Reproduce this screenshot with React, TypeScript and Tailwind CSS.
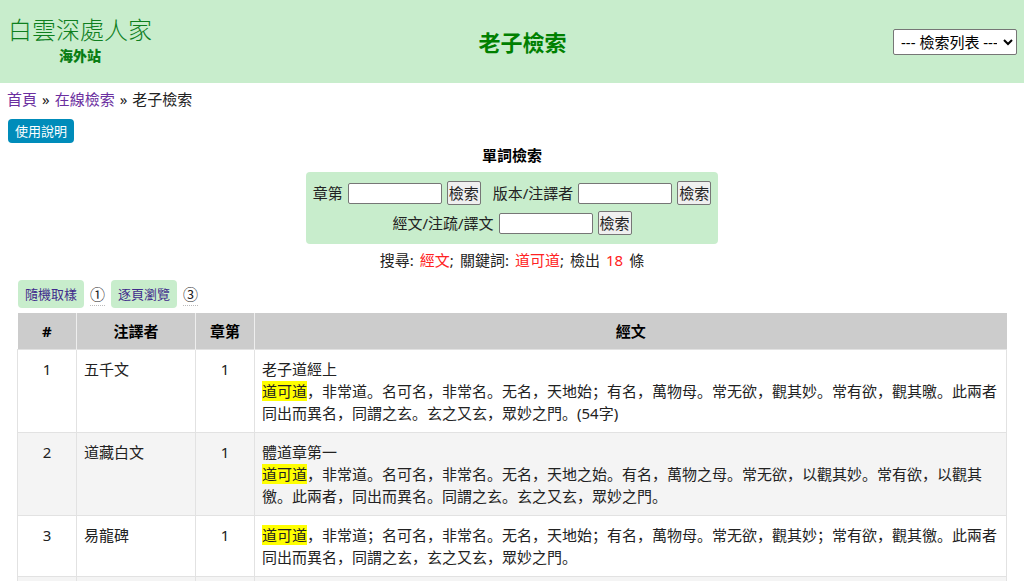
import React from "react";

type Row = { id: number; annotator: string; chapter: number; title?: string; text: string };

const rows: Row[] = [
  {
    id: 1,
    annotator: "五千文",
    chapter: 1,
    title: "老子道經上",
    text: "，非常道。名可名，非常名。无名，天地始；有名，萬物母。常无欲，觀其妙。常有欲，觀其曒。此兩者同出而異名，同謂之玄。玄之又玄，眾妙之門。(54字)",
  },
  {
    id: 2,
    annotator: "道藏白文",
    chapter: 1,
    title: "體道章第一",
    text: "，非常道。名可名，非常名。无名，天地之始。有名，萬物之母。常无欲，以觀其妙。常有欲，以觀其徼。此兩者，同出而異名。同謂之玄。玄之又玄，眾妙之門。",
  },
  {
    id: 3,
    annotator: "易龍碑",
    chapter: 1,
    text: "，非常道；名可名，非常名。无名，天地始；有名，萬物母。常无欲，觀其妙；常有欲，觀其徼。此兩者同出而異名，同謂之玄，玄之又玄，眾妙之門。",
  },
];

function SearchField({ id, label }: { id: string; label: string }) {
  return (
    <form className="flex items-center gap-[5px]" onSubmit={(e) => e.preventDefault()}>
      <label htmlFor={id}>{label}</label>
      <input
        id={id}
        type="text"
        className="h-[21px] w-[94px] rounded-xs border border-[#767676] bg-white px-1"
      />
      <button
        type="submit"
        className="h-6 rounded-xs border border-[#767676] bg-[#efefef] px-px leading-[22px]"
      >
        檢索
      </button>
    </form>
  );
}

function SiteHeader() {
  return (
    <header className="grid h-[83px] grid-cols-[auto_1fr_auto] items-center bg-[#c8edcc] pr-[7px] pl-2">
      <a href="#home" className="flex w-36 flex-col items-center pb-1 text-[#0f7f1e]">
        <span className="text-2xl leading-8 font-light">白雲深處人家</span>
        <span className="text-sm leading-5 font-black text-[#0a7d14]">海外站</span>
      </a>
      <h1 className="text-center text-[22px] leading-8 font-bold text-[#008000]">老子檢索</h1>
      <select
        aria-label="檢索列表"
        className="h-[26px] w-[124px] rounded-xs border border-[#767676] bg-white px-[3px] text-black"
      >
        <option>--- 檢索列表 ---</option>
      </select>
    </header>
  );
}

export default function App() {
  return (
    <div className="bg-white font-['Noto_Sans','Noto_Sans_CJK_SC',sans-serif] text-[15px] leading-[22px] text-[#222]">
      <SiteHeader />
      <nav className="flex gap-[5px] px-[7px] pt-[5px]">
        <a href="#home" className="text-[#6b2fa0]">首頁</a>
        <span>»</span>
        <a href="#online" className="text-[#6b2fa0]">在線檢索</a>
        <span>»</span>
        <span>老子檢索</span>
      </nav>
      <main>
        <div className="px-2 pt-[9px]">
          <button type="button" className="block h-6 rounded-sm bg-[#008cba] px-[7px] text-[13px] leading-[22px] text-white">
            使用說明
          </button>
        </div>

        <section className="flex flex-col items-center pt-px">
          <h2 className="font-bold text-black">單詞檢索</h2>
          <div className="mt-[6px] flex w-[412px] flex-wrap justify-center gap-x-3 gap-y-[6px] rounded-sm bg-[#c8edcc] py-[9px]">
            <SearchField id="chapter" label="章第" />
            <SearchField id="edition" label="版本/注譯者" />
            <SearchField id="content" label="經文/注疏/譯文" />
          </div>
          <p className="flex gap-[6px] pt-[5px]">
            <span>搜尋:</span>
            <span><span className="text-[#f22]">經文</span>;</span>
            <span>關鍵詞:</span>
            <span><span className="text-[#f22]">道可道</span>;</span>
            <span>檢出</span>
            <span className="text-[#f22]">18</span>
            <span>條</span>
          </p>
        </section>

        <div className="flex items-center gap-[6px] px-[18px] pt-[9px] pb-[5px]">
          <a href="#random" className="rounded-sm bg-[#c8edcc] px-[7px] py-[3px] text-[13px] text-[#402a8b]">隨機取樣</a>
          <abbr title="1" className="border-b border-dotted border-[#bbb] no-underline">①</abbr>
          <a href="#browse" className="rounded-sm bg-[#c8edcc] px-[7px] py-[3px] text-[13px] text-[#402a8b]">逐頁瀏覽</a>
          <abbr title="3" className="border-b border-dotted border-[#bbb] no-underline">③</abbr>
        </div>

        <div className="px-[17px]">
          <table className="w-full table-fixed border-collapse">
            <colgroup>
              <col className="w-[59px]" />
              <col className="w-[119px]" />
              <col className="w-[59px]" />
              <col />
            </colgroup>
            <thead>
              <tr className="bg-[#ccc] text-black">
                <th className="border-r border-[#eee] py-[7px]">#</th>
                <th className="border-r border-[#eee] py-[7px]">注譯者</th>
                <th className="border-r border-[#eee] py-[7px]">章第</th>
                <th className="py-[7px]">經文</th>
              </tr>
            </thead>
            <tbody>
              {rows.map((row) => (
                <tr key={row.id} className="align-top odd:bg-white even:bg-[#f4f4f4]">
                  <td className="border border-[#e2e2e2] py-2 text-center">{row.id}</td>
                  <td className="border border-[#e2e2e2] px-[7px] py-2">{row.annotator}</td>
                  <td className="border border-[#e2e2e2] py-2 text-center">{row.chapter}</td>
                  <td className="border border-[#e2e2e2] py-2 pl-[7px]">
                    {row.title && <div>{row.title}</div>}
                    <mark className="bg-[#ff0] text-inherit">道可道</mark>
                    {row.text}
                  </td>
                </tr>
              ))}
              <tr className="h-[5px] bg-[#f4f4f4]">
                <td className="border-x border-[#e2e2e2]" />
                <td className="border-x border-[#e2e2e2]" />
                <td className="border-x border-[#e2e2e2]" />
                <td className="border-x border-[#e2e2e2]" />
              </tr>
            </tbody>
          </table>
        </div>
      </main>
    </div>
  );
}
